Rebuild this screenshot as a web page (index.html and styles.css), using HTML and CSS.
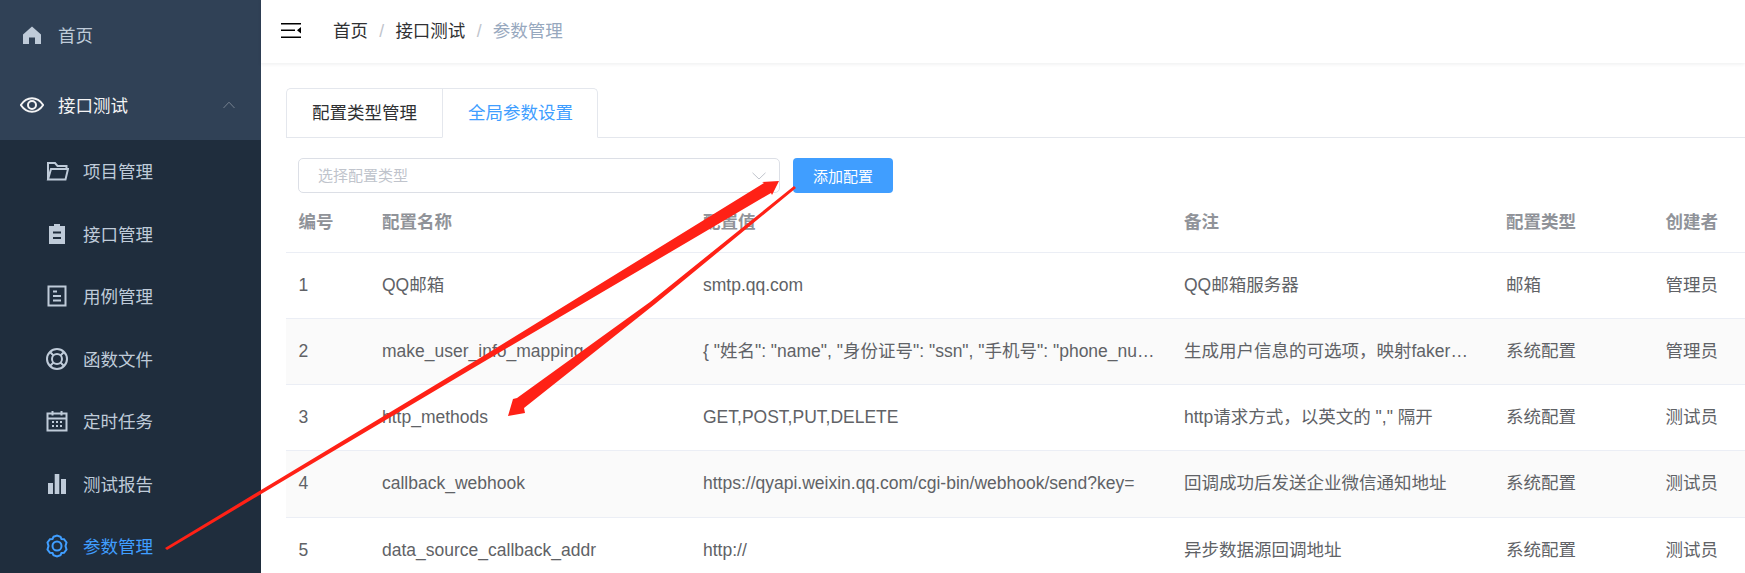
FILE: index.html
```html
<!DOCTYPE html>
<html lang="zh-CN">
<head>
  <meta charset="UTF-8" />
  <title>参数管理</title>
  <link rel="stylesheet" href="styles.css">
</head>
<body>
  <div class="app">
    <!-- 侧边栏 -->
    <aside class="sidebar">
      <div class="menu-item">
        <svg class="icon" viewBox="0 0 24 24"><path class="solid" d="M12 3.500 21 11.500V21H15V14.500H9V21H3V11.500Z"/></svg>
        <span>首页</span>
      </div>
      <div class="menu-item open">
        <svg class="icon" viewBox="0 0 24 24"><path class="line" d="M.8 12C4 7.200 8 5.200 12 5.200S20 7.200 23.200 12C20 16.800 16 18.800 12 18.800S4 16.800 .8 12Z"/><circle class="line" cx="12" cy="12" r="4"/></svg>
        <span>接口测试</span>
        <svg class="caret" viewBox="0 0 12 8"><path d="M.5 7 6 1.200 11.500 7"/></svg>
      </div>
      <ul class="submenu">
        <li class="sub-item">
          <svg class="icon" viewBox="0 0 24 24"><path class="line" d="M3 20.500V4H10L12.500 7H21.500V10M3 20.500 6 10H23L20.500 20.500Z"/></svg>
          <span>项目管理</span>
        </li>
        <li class="sub-item">
          <svg class="icon" viewBox="0 0 24 24"><path class="solid" d="M4 4H9V2H15V4H20V22H4Z"/><path class="cut" d="M8 10.500H16M8 16H16"/></svg>
          <span>接口管理</span>
        </li>
        <li class="sub-item">
          <svg class="icon" viewBox="0 0 24 24"><path class="line" d="M3.500 2.500H20.500V21.500H3.500Z"/><path class="line" d="M8 7.500H12M8 12H16M8 16.500H16"/></svg>
          <span>用例管理</span>
        </li>
        <li class="sub-item">
          <svg class="icon" viewBox="0 0 24 24"><circle class="line" cx="12" cy="12" r="10"/><circle class="line" cx="12" cy="12" r="5"/><path class="line" d="M5 5 8.500 8.500M19 5 15.500 8.500M5 19 8.500 15.500M19 19 15.500 15.500"/></svg>
          <span>函数文件</span>
        </li>
        <li class="sub-item">
          <svg class="icon" viewBox="0 0 24 24"><path class="line" d="M2.500 4.500H21.500V21.500H2.500ZM2.500 9.500H21.500M7.500 2V6.500M16.500 2V6.500"/><path class="line" d="M7 13H9M11 13H13M15 13H17M7 17H9M11 17H13M15 17H17"/></svg>
          <span>定时任务</span>
        </li>
        <li class="sub-item">
          <svg class="icon" viewBox="0 0 24 24"><path class="solid" d="M3 11H8V22H3ZM9.700 2H14.300V22H9.700ZM16 7H21V22H16Z"/></svg>
          <span>测试报告</span>
        </li>
        <li class="sub-item active">
          <svg class="icon" viewBox="0 0 24 24"><path class="line" d="M8.500 2.800 12 1.500 15.500 2.800 16.500 5 19 5.200 21.500 8.500 20.500 12 21.500 15.500 19 18.800 16.500 19 15.500 21.200 12 22.500 8.500 21.200 7.500 19 5 18.800 2.500 15.500 3.500 12 2.500 8.500 5 5.200 7.500 5Z"/><circle class="line" cx="12" cy="12" r="4.500"/></svg>
          <span>参数管理</span>
        </li>
      </ul>
    </aside>

    <main class="main">
      <!-- 顶部导航 -->
      <header class="navbar">
        <svg class="hamburger" viewBox="0 0 20 17"><path d="M0 1H20V2.500H0ZM0 7.500H14V9H0ZM0 14.500H20V16H0ZM20 5 16 8.200 20 11.500Z"/></svg>
        <nav class="crumbs">
          <span>首页</span><i>/</i><span>接口测试</span><i>/</i><span class="current">参数管理</span>
        </nav>
      </header>

      <section class="content">
        <div class="tabs">
          <div class="tab">配置类型管理</div>
          <div class="tab active">全局参数设置</div>
        </div>

        <div class="toolbar">
          <div class="select">
            <span>选择配置类型</span>
            <svg class="select-arrow" viewBox="0 0 14 8"><path d="M.5 .8 7 7 13.500 .8"/></svg>
          </div>
          <button class="btn">添加配置</button>
        </div>

        <table class="grid">
          <colgroup>
            <col class="c-id"><col class="c-name"><col class="c-value"><col class="c-note"><col class="c-type"><col class="c-user">
          </colgroup>
          <thead>
            <tr><th>编号</th><th>配置名称</th><th>配置值</th><th>备注</th><th>配置类型</th><th>创建者</th></tr>
          </thead>
          <tbody>
            <tr><td>1</td><td>QQ邮箱</td><td>smtp.qq.com</td><td>QQ邮箱服务器</td><td>邮箱</td><td>管理员</td></tr>
            <tr><td>2</td><td>make_user_info_mapping</td><td>{ "姓名": "name", "身份证号": "ssn", "手机号": "phone_number", "邮箱": "email" }</td><td>生成用户信息的可选项，映射faker的方法名称</td><td>系统配置</td><td>管理员</td></tr>
            <tr><td>3</td><td>http_methods</td><td>GET,POST,PUT,DELETE</td><td>http请求方式，以英文的 "," 隔开</td><td>系统配置</td><td>测试员</td></tr>
            <tr><td>4</td><td>callback_webhook</td><td>https://qyapi.weixin.qq.com/cgi-bin/webhook/send?key=</td><td>回调成功后发送企业微信通知地址</td><td>系统配置</td><td>测试员</td></tr>
            <tr><td>5</td><td>data_source_callback_addr</td><td>http://</td><td>异步数据源回调地址</td><td>系统配置</td><td>测试员</td></tr>
          </tbody>
        </table>
      </section>
    </main>

    <!-- 截图上的红色标注箭头 -->
    <svg class="marks" viewBox="0 0 1745 573">
      <path d="M165 548 480 358 764 183 762 182 779 181 772 195 771 193 480 364 167 550Z"/>
      <path d="M794 186 650 302 517 398 513 399 508 416 525 413 524 408 655 304 796 188Z"/>
    </svg>
  </div>
</body>
</html>
```

FILE: styles.css
```css
html, body {
  margin: 0;
  height: 100%;
  overflow: hidden;
}

body {
  font-family: "Liberation Sans", "Noto Sans CJK SC", sans-serif;
  font-size: 17.5px;
  line-height: 21px;
  color: #606266;
}

.app {
  position: relative;
  display: flex;
  width: 1745px;
  height: 573px;
  overflow: hidden;
}

/* 侧边栏 */
.sidebar {
  flex: 0 0 261px;
  background-color: #304156;
  color: #bfcbd9;
}

.menu-item {
  display: flex;
  align-items: center;
  height: 70px;
  padding-left: 20px;
}

.menu-item span {
  padding-top: 2px;
}

.menu-item.open {
  color: #f4f4f5;
}

.icon {
  flex: none;
  width: 24px;
  height: 24px;
  margin-right: 14px;
}

.icon .solid {
  fill: currentColor;
}

.icon .line {
  fill: none;
  stroke: currentColor;
  stroke-width: 2;
}

.icon .cut {
  fill: none;
  stroke: #1f2d3d;
  stroke-width: 2;
}

.caret {
  width: 12px;
  height: 8px;
  margin-left: 95px;
  fill: none;
  stroke: #76818f;
  stroke-width: 1;
}

.submenu {
  list-style: none;
  margin: 0;
  padding: 0;
  background-color: #1f2d3d;
}

.sub-item {
  display: flex;
  align-items: center;
  height: 62.5px;
  padding-left: 45px;
}

.sub-item span {
  padding-top: 3px;
}

.sub-item.active {
  color: #409eff;
}

/* 主区域 */
.main {
  flex: 1;
  min-width: 0;
}

.navbar {
  display: flex;
  align-items: center;
  height: 62.5px;
  padding-left: 20px;
  box-shadow: 0 1px 4px rgba(0, 21, 41, 0.08);
}

.hamburger {
  width: 20px;
  height: 17px;
  margin-right: 32px;
  margin-top: -2px;
}

.crumbs {
  color: #303133;
}

.crumbs i {
  margin: 0 11.25px;
  font-style: normal;
  color: #c0c4cc;
}

.crumbs .current {
  color: #97a8be;
}

.content {
  padding: 25px 0 0 25px;
}

.tabs {
  display: flex;
  box-sizing: border-box;
  height: 50px;
  border-bottom: 1px solid #e4e7ed;
}

.tab {
  box-sizing: border-box;
  width: 156px;
  height: 50px;
  padding: 0 25px;
  line-height: 49px;
  white-space: nowrap;
  color: #303133;
  background-color: #fff;
  border: 1px solid #e4e7ed;
}

.tab:first-child {
  border-right: 0;
  border-radius: 5px 0 0 0;
}

.tab.active {
  color: #409eff;
  border-bottom-color: #fff;
  border-radius: 0 5px 0 0;
}

.toolbar {
  display: flex;
  gap: 13px;
  margin: 20px 0 0 12px;
}

.select {
  position: relative;
  box-sizing: border-box;
  width: 482px;
  height: 35px;
  padding-left: 19px;
  line-height: 33px;
  font-size: 15px;
  color: #c0c4cc;
  border: 1px solid #dcdfe6;
  border-radius: 5px;
}

.select-arrow {
  position: absolute;
  right: 13px;
  top: 13px;
  width: 14px;
  height: 8px;
  fill: none;
  stroke: #c0c4cc;
  stroke-width: 1;
}

.btn {
  width: 100px;
  height: 35px;
  padding: 0;
  font-family: inherit;
  font-size: 15px;
  color: #fff;
  background-color: #409eff;
  border: 0;
  border-radius: 4px;
}

/* 表格 */
.grid {
  width: 1500px;
  table-layout: fixed;
  border-collapse: collapse;
}

.c-id { width: 83.5px; }
.c-name { width: 321px; }
.c-value { width: 481px; }
.c-note { width: 322px; }
.c-type { width: 159.5px; }

.grid th,
.grid td {
  padding: 0 12.5px;
  text-align: left;
  white-space: nowrap;
  overflow: hidden;
  text-overflow: ellipsis;
  border-bottom: 1px solid #ebeef5;
}

.grid th {
  height: 59px;
  font-weight: bold;
  color: #909399;
}

.grid td {
  height: 65.25px;
}

.grid tbody tr:nth-child(even) td {
  background-color: #fafafa;
}

/* 标注 */
.marks {
  position: absolute;
  left: 0;
  top: 0;
  width: 1745px;
  height: 573px;
  fill: #ff2116;
  pointer-events: none;
}
```
